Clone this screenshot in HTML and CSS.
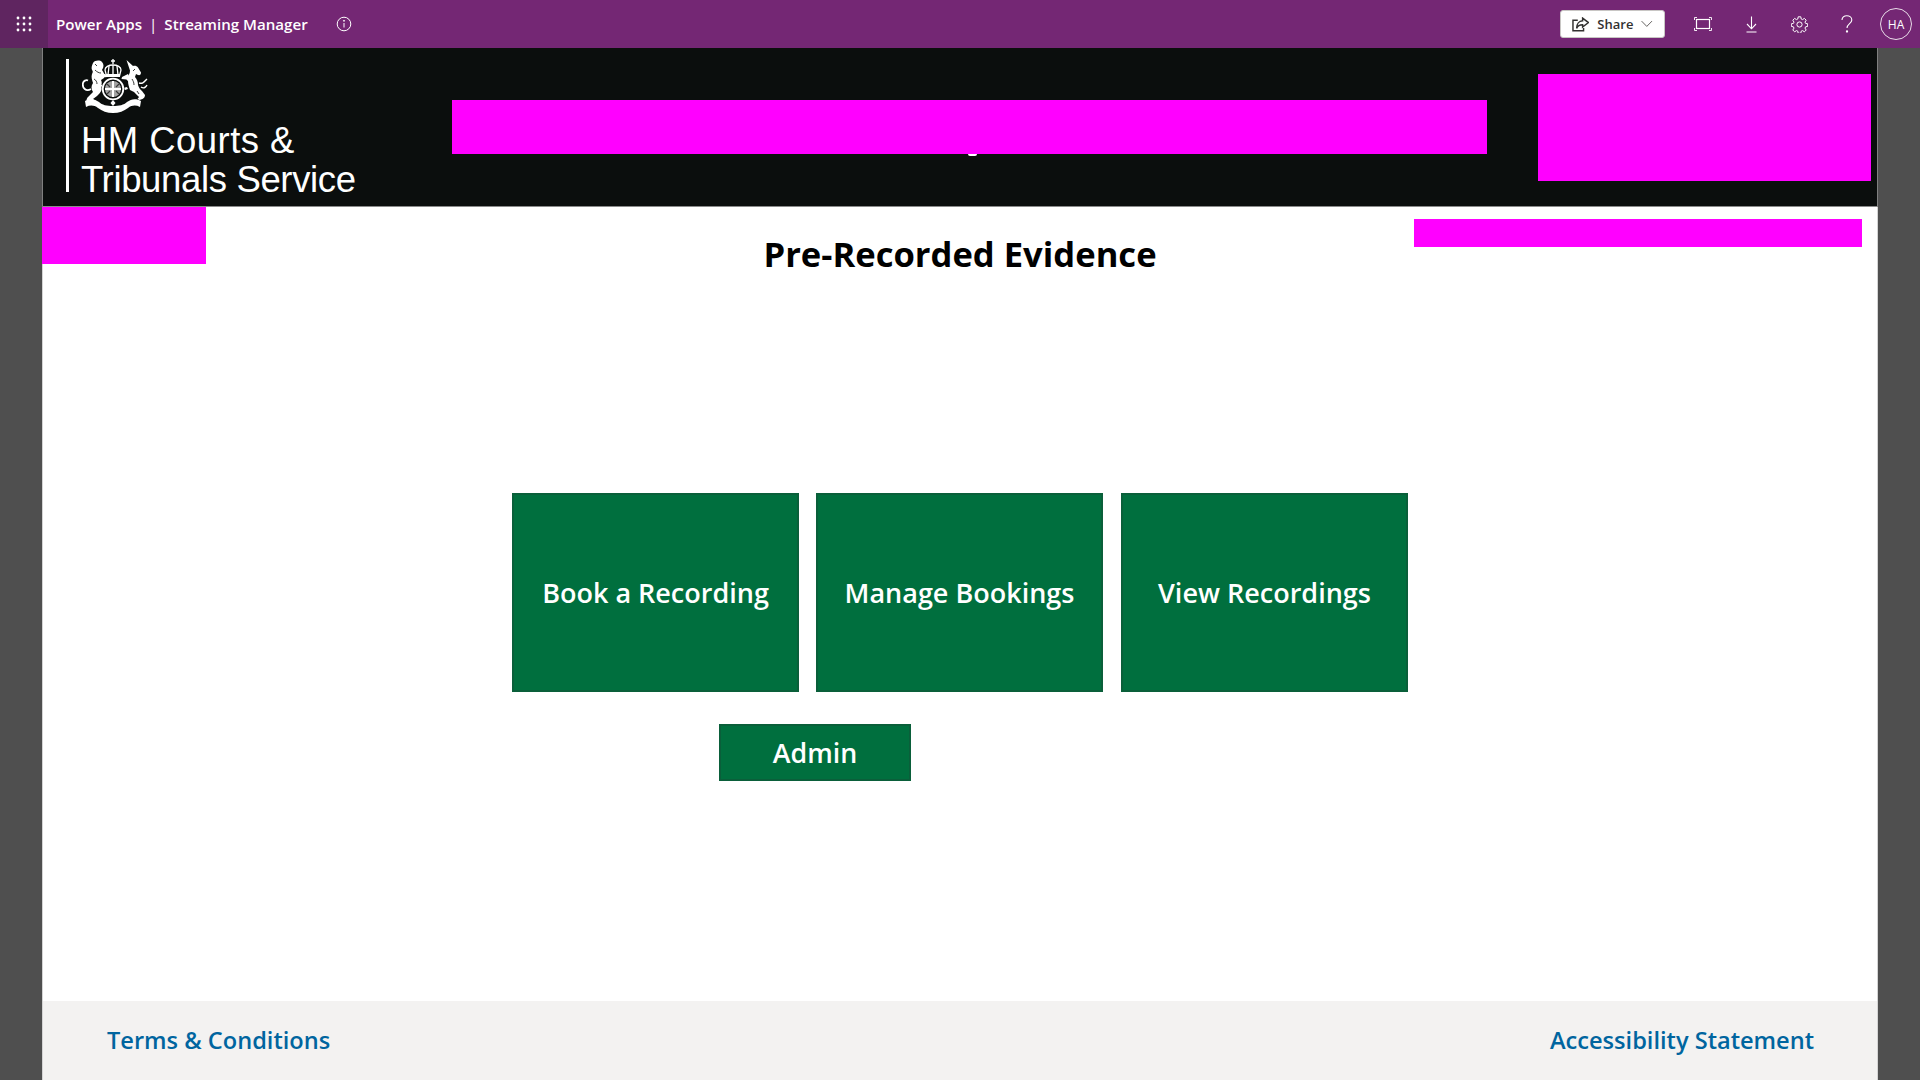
FILE: index.html
```html
<!DOCTYPE html>
<html lang="en">
<head>
<meta charset="utf-8">
<title>Streaming Manager</title>
<link rel="stylesheet" href="styles.css">
</head>
<body>
<header class="topbar">
  <div class="waffle">
    <svg width="16" height="16" viewBox="0 0 16 16" fill="#fff"><circle cx="2" cy="2" r="1.4"/><circle cx="8" cy="2" r="1.4"/><circle cx="14" cy="2" r="1.4"/><circle cx="2" cy="8" r="1.4"/><circle cx="8" cy="8" r="1.4"/><circle cx="14" cy="8" r="1.4"/><circle cx="2" cy="14" r="1.4"/><circle cx="8" cy="14" r="1.4"/><circle cx="14" cy="14" r="1.4"/></svg>
  </div>
  <div class="app-name"><span>Power Apps</span><span class="sep">|</span><span>Streaming Manager</span></div>
  <svg class="info" width="16" height="16" viewBox="0 0 16 16" fill="none" stroke="#fff"><circle cx="8" cy="8" r="6.8"/><path d="M8 7v4.500"/><circle cx="8" cy="4.800" r=".5" fill="#fff"/></svg>
  <div class="actions">
    <button class="share">
      <svg width="18" height="15" viewBox="0 0 18 15" fill="none" stroke="#323130" stroke-width="1.5"><path d="M6 3H1v11h11v-3"/><path d="M11 .9l6 4.600-6 4.600V7.700C8 7.700 5.800 9 4.800 11.500 4.800 7 7.500 3.900 11 3.700z"/></svg>
      <span>Share</span>
      <svg width="12" height="8" viewBox="0 0 12 8" fill="none" stroke="#605e5c"><path d="M.6 1l5.400 5.500L11.400 1"/></svg>
    </button>
    <span class="action">
      <svg width="18" height="14" viewBox="0 0 18 14" fill="none" stroke="#fff"><rect x="2.500" y="2.500" width="13" height="9" stroke-width="1.2"/><path d="M.5 3V.5H3M15 .5h2.500V3M.5 11v2.500H3M15 13.500h2.500V11" stroke-width=".9"/></svg>
    </span>
    <span class="action">
      <svg width="11" height="17" viewBox="0 0 11 17" fill="none" stroke="#fff"><path d="M5.500 .5v12M1 8l4.500 4.800L10 8M.5 16h10" stroke-width="1.1"/></svg>
    </span>
    <span class="action">
      <svg width="17" height="17" viewBox="0 0 17 17" fill="none" stroke="#fff"><circle cx="8.500" cy="8.500" r="2.600"/><path d="M7.200.8h2.600l.4 2.200 1.300.6 1.900-1.200 1.800 1.800-1.200 1.900.6 1.300 2.100.4v2.600l-2.100.4-.6 1.300 1.200 1.900-1.800 1.800-1.900-1.200-1.300.6-.4 2.100H7.200l-.4-2.100-1.300-.6-1.900 1.200-1.800-1.800 1.200-1.900-.6-1.300-2.100-.4V7.800l2.100-.4.6-1.300-1.200-1.900 1.800-1.800 1.900 1.200 1.300-.6z"/></svg>
    </span>
    <span class="action">
      <svg width="12" height="18" viewBox="0 0 12 18" fill="none" stroke="#fff" stroke-width="1.1"><path d="M1 5c0-2.500 2-4.300 4.800-4.300S10.800 2.500 10.800 5c0 3.500-4.800 3.800-4.800 8"/><circle cx="6" cy="16.500" r=".6" fill="#fff"/></svg>
    </span>
    <span class="avatar">HA</span>
  </div>
</header>

<div class="stage">
  <main class="canvas">
    <section class="banner">
      <div class="logo">
        <svg class="crest" width="66" height="54" viewBox="0 0 66 54">
          <g fill="none" stroke="#fff" stroke-width="1.300">
            <path d="M31 0v5M29 2h4"/>
            <path d="M24.500 17l-1.500-6c0-3 3.500-5 8-5s8 2 8 5l-1.500 6z"/>
            <path d="M31 6v11M27 7l-1 9M35 7l1 9"/>
          </g>
          <path d="M24 15h14v3H24z" fill="#fff"/>
          <g fill="#fff">
            <path d="M11 4c2-3 7-3 9-1 2 2 2 5 0 8 2 3 3 5 2 8l-3 2c1 2 1 4 0 6l1 3c-1 3-3 5-5 7l-4 3 3 2 1 2H6c-2-1-2-4 0-6l5-5c-2-3-2-6 0-9-1-3-2-6-1-9 1-2 1-3 0-4-1-2 0-5 1-7z"/>
            <path d="M18 13l7 3 .5 2-5 .5-4-2z"/>
            <path d="M18 26h4v2l-2 1z"/>
          </g>
          <path d="M9 30C4 33 0 29 1 24c.5-2 3-3.500 5-2.500" fill="none" stroke="#fff" stroke-width="1.800"/>
          <path d="M13 5l2 2M13 11c2 2 4 3 6 3M12 20c2 1 3 3 3 5" fill="none" stroke="#0b0e0d" stroke-width=".8"/>
          <g fill="#fff">
            <path d="M44.500 1l6.500 6c2-.5 4 0 5 1.500l3 5c0 2-1 3-3 2.500l-2-1-1 3c2 2 3 5 3 8 1 3 2 4 4 6l3 4c0 2-1 3-2.500 4l-3 1-2-1 1.500-2-5-5-4-2c-1-3-2-6-2-9-1.500-1-2-2-1.500-3.500 2-1.500 3.500-4 3.500-7l-1-3z"/>
            <path d="M46 15l-6 3-.5 2 5 .5 3-2z"/>
            <path d="M45 28l-4 1 2 2 3-1z"/>
          </g>
          <path d="M57 24c4 1 5-1 8-4M59 28c3 2 5 0 6-2" fill="none" stroke="#fff" stroke-width="1.400"/>
          <path d="M53 10l-2 2M50 20c1 2 2 3 2 6M55 32l2 3" fill="none" stroke="#0b0e0d" stroke-width=".8"/>
          <circle cx="31" cy="30" r="11.500" fill="#0b0e0d"/>
          <circle cx="31" cy="30" r="10.300" fill="none" stroke="#fff" stroke-width="1.800"/>
          <circle cx="31" cy="30" r="8" fill="#a3a3a3"/>
          <path d="M30 22h2v16h-2zM23 29h16v2H23z" fill="#fff"/>
          <path d="M25 25l3 3M37 25l-3 3M25 35l3-3M37 35l-3-3" stroke="#3a3a3a" stroke-width="1.200"/>
          <path d="M3 42c5-3 10-2 14 1 3 3 8 4 14 4s11-1 14-4c4-3 9-4 14-1l-1 6c-4-2-8-2-12 1-4 3-9 5-15 5s-11-2-15-5c-4-3-8-3-12-1z" fill="#fff"/>
          <path d="M31 41l2.500 3-2.500 3-2.500-3z" fill="#fff"/>
        </svg>
        <div class="logo-text"><span class="line-one">HM Courts &amp;</span><span class="line-two">Tribunals Service</span></div>
      </div>
    </section>

    <section class="content">
      <h1 class="title">Pre-Recorded Evidence</h1>
      <div class="tiles">
        <a class="tile">Book a Recording</a>
        <a class="tile tile-mid">Manage Bookings</a>
        <a class="tile">View Recordings</a>
      </div>
      <a class="admin">Admin</a>
    </section>

    <footer class="footer">
      <a class="link">Terms &amp; Conditions</a>
      <a class="link">Accessibility Statement</a>
    </footer>

    <div class="redact r-title"></div>
    <div class="tail"></div>
    <div class="redact r-user"></div>
    <div class="redact r-back"></div>
    <div class="redact r-info"></div>
  </main>
</div>
</body>
</html>
```
FILE: styles.css
```css
* { box-sizing: border-box; }
html, body { margin: 0; height: 100%; overflow: hidden; }
body {
  display: flex;
  flex-direction: column;
  background: #4f4f4f;
  font-family: "Open Sans", sans-serif;
}

.topbar {
  height: 48px;
  flex: none;
  display: flex;
  align-items: center;
  background: #742774;
  color: #fff;
}
.waffle {
  width: 48px;
  height: 48px;
  display: flex;
  align-items: center;
  justify-content: center;
  background: #5f2560;
}
.app-name {
  margin-left: 8px;
  display: flex;
  gap: 7px;
  font-size: 15.1px;
  font-weight: 600;
  white-space: nowrap;
}
.sep { font-weight: 400; }
.info { margin-left: 28px; }
.actions {
  margin-left: auto;
  display: flex;
  align-items: center;
}
.share {
  width: 105px;
  height: 28px;
  padding: 0 11px;
  display: flex;
  align-items: center;
  gap: 8px;
  background: #fff;
  border: 1px solid #c8c6c4;
  border-radius: 3px;
  font-family: "Open Sans", sans-serif;
  font-size: 13px;
  font-weight: 600;
  color: #323130;
  margin-right: 14px;
}
.action {
  width: 48px;
  height: 48px;
  display: flex;
  align-items: center;
  justify-content: center;
}
.avatar {
  width: 32px;
  height: 32px;
  margin: 0 8px 0 9px;
  border: 1px solid #e8dce8;
  border-radius: 50%;
  display: flex;
  align-items: center;
  justify-content: center;
  font-size: 12px;
  font-weight: 400;
}

.stage {
  flex: 1;
  min-height: 0;
  padding-left: 42px;
  display: flex;
}
.canvas {
  position: relative;
  width: 1836px;
  display: flex;
  flex-direction: column;
  background: #fff;
  border-left: 1px solid #d4d4d4;
  border-right: 1px solid #d4d4d4;
}

.banner {
  height: 159px;
  flex: none;
  background: #0b0e0d;
  border-bottom: 1px solid #8a8a8a;
  box-shadow: -1px 0 0 #808080, 1px 0 0 #808080;
  padding: 11px 0 0 23px;
}
.logo {
  width: 300px;
  height: 133px;
  padding-left: 12px;
  border-left: 3px solid #fff;
}
.crest { display: block; margin: 0 0 8px 1px; }
.logo-text {
  font-family: "Liberation Sans", Arial, sans-serif;
  font-size: 36.5px;
  line-height: 39px;
  color: #fff;
  white-space: nowrap;
}
.line-one, .line-two { display: block; }
.line-one { letter-spacing: .45px; }
.line-two { letter-spacing: -.35px; }

.content {
  flex: 1;
  min-height: 0;
  display: flex;
  flex-direction: column;
}
.title {
  margin: 22px 0 0;
  height: 50px;
  line-height: 50px;
  text-align: center;
  font-size: 34.6px;
  font-weight: 700;
  color: #000;
}
.tiles {
  margin: 214px 0 0 469px;
  display: flex;
  height: 199px;
}
.tile {
  width: 287px;
  margin-right: 18px;
  display: flex;
  align-items: center;
  justify-content: center;
  background: #006f3e;
  border: 2px solid #0a5f3a;
  color: #fff;
  font-size: 27px;
  font-weight: 600;
}
.tile-mid { margin-left: -1px; }
.admin {
  width: 192px;
  height: 57px;
  margin: 32px 0 0 676px;
  display: flex;
  align-items: center;
  justify-content: center;
  background: #006f3e;
  border: 2px solid #0a5f3a;
  color: #fff;
  font-size: 26.8px;
  font-weight: 600;
}

.footer {
  height: 79px;
  flex: none;
  padding: 0 63px 2px 64px;
  display: flex;
  align-items: center;
  justify-content: space-between;
  background: #f3f2f1;
}
.link {
  color: #00659f;
  font-size: 23.6px;
  font-weight: 600;
}

.redact { position: absolute; background: #ff00ff; }
.r-title { left: 409px; top: 52px; width: 1035px; height: 54px; }
.r-user { left: 1495px; top: 26px; width: 333px; height: 107px; }
.r-back { left: -1px; top: 159px; width: 164px; height: 57px; }
.r-info { left: 1371px; top: 171px; width: 448px; height: 28px; }
.tail {
  position: absolute;
  left: 925px;
  top: 106px;
  width: 9px;
  height: 2px;
  background: #fff;
  border-radius: 0 0 4px 4px;
}
```
